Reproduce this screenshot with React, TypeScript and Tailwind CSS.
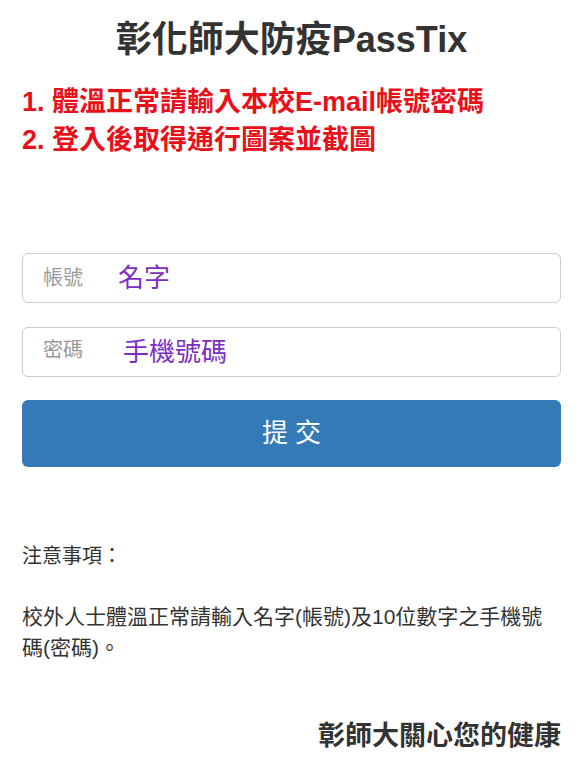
import React from "react";

const font = { fontFamily: '"Liberation Sans", "Noto Sans CJK TC", sans-serif' };

export default function App() {
  return (
    <div className="min-h-[760px] bg-white pl-[22px] pr-[17px] pt-[20px] text-[#333]" style={font}>
      <h1 className="text-center text-[36px] font-bold leading-[40px] text-[#333]">
        彰化師大防疫PassTix
      </h1>
      <div className="mt-[23px] text-[27px] font-bold leading-[38px] text-[#e8111b]">
        <div>1. 體溫正常請輸入本校E-mail帳號密碼</div>
        <div>2. 登入後取得通行圖案並截圖</div>
      </div>

      <div className="mt-[94px] flex h-[50px] items-center rounded-[6px] border border-[#cccccc] pl-[20px]">
        <span className="w-[75px] text-[20px] text-[#999]">帳號</span>
        <span className="text-[26px] leading-none text-[#7b2fc2]">名字</span>
      </div>
      <div className="mt-[24px] flex h-[50px] items-center rounded-[6px] border border-[#cccccc] pl-[20px]">
        <span className="w-[80px] -translate-y-[2px] text-[20px] text-[#999]">密碼</span>
        <span className="text-[26px] leading-none text-[#7b2fc2]">手機號碼</span>
      </div>
      <button className="mt-[23px] flex h-[67px] w-full items-center justify-center rounded-[6px] bg-[#337ab7] text-[26px] text-white">
        提 交
      </button>

      <div className="mt-[74px] text-[20px] leading-[31px] text-[#333]">注意事項：</div>
      <p className="mt-[29px] text-[21px] leading-[31px] text-[#333]">
        校外人士體溫正常請輸入名字(帳號)及10位數字之手機號碼(密碼)。
      </p>
      <div className="mt-[54px] text-right text-[27px] font-bold leading-[38px] text-[#333]">
        彰師大關心您的健康
      </div>
    </div>
  );
}
